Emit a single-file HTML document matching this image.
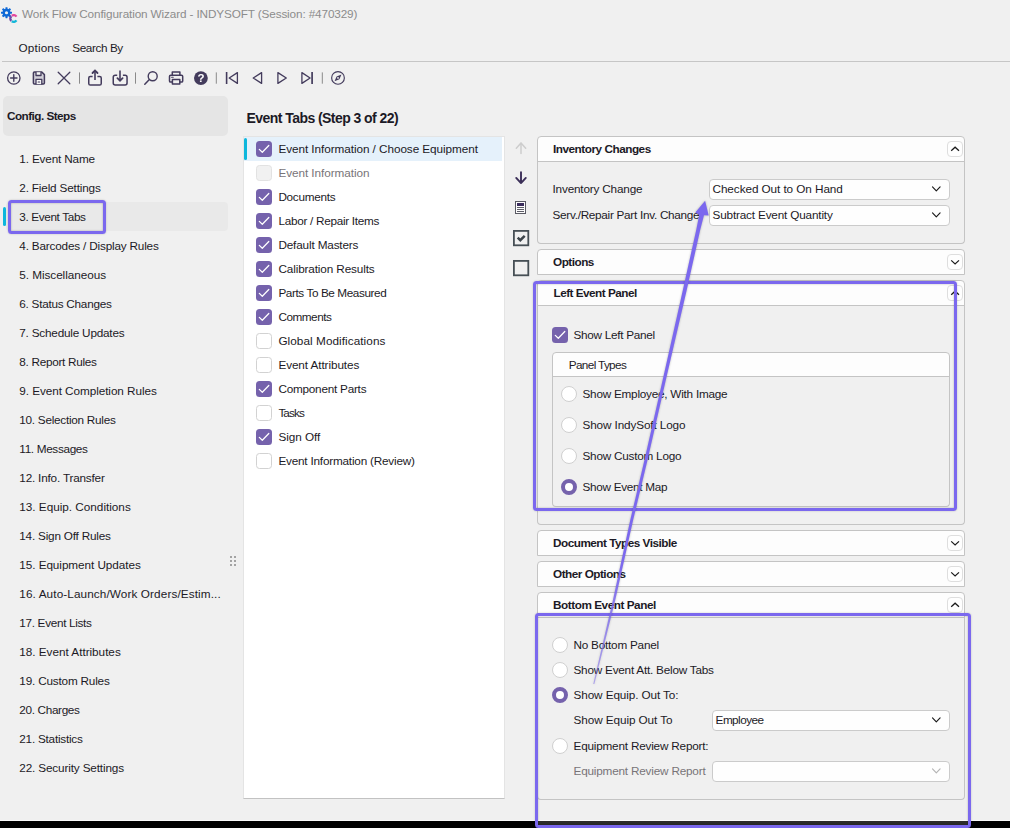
<!DOCTYPE html>
<html lang="en"><head><meta charset="utf-8"><title>Work Flow Configuration Wizard - INDYSOFT</title>
<style>
html,body{margin:0;padding:0}
body{width:1010px;height:828px;overflow:hidden;background:#f0f0f0;position:relative;font-family:"Liberation Sans",Arial,sans-serif;font-size:11.75px;color:#1c1a26}
.a{position:absolute}
.t{position:absolute;white-space:pre;line-height:14px;height:14px}
.b{font-weight:bold}
.box{position:absolute;box-sizing:border-box}
.hdr{position:absolute;box-sizing:border-box;background:#fdfdfd;border:1px solid #c4c4c4}
.body{position:absolute;box-sizing:border-box;border:1px solid #c4c4c4;border-top:none;border-radius:0 0 4px 4px}
.cb{position:absolute;box-sizing:border-box;width:16px;height:16px;border-radius:3.5px}
.cb.on{background:#7562ac}
.cb.off{background:#fff;border:1px solid #d2d2d2}
.cb.dis{background:#f1f1f1;border:1px solid #e2e2e2}
.rd{position:absolute;box-sizing:border-box;width:16px;height:16px;border-radius:50%;background:#fff;border:1px solid #d0d0d0}
.rd.on{border:4px solid #7562ac}
.combo{position:absolute;box-sizing:border-box;background:#fefefe;border:1px solid #cbcbcb;border-radius:4px;height:21px}
.btn{position:absolute;box-sizing:border-box;width:16px;height:16px;background:#fefefe;border:1px solid #dedede;border-radius:4px}
svg{position:absolute;overflow:visible}

</style></head><body>

<svg style="left:0;top:0" width="24" height="28" viewBox="0 0 24 28">
<g transform="translate(6.5 12.7)" fill="#0f69d6"><circle r="3.9"/><rect x="-1.05" y="-5.5" width="2.1" height="3" rx=".4" transform="rotate(0)"/><rect x="-1.05" y="-5.5" width="2.1" height="3" rx=".4" transform="rotate(45)"/><rect x="-1.05" y="-5.5" width="2.1" height="3" rx=".4" transform="rotate(90)"/><rect x="-1.05" y="-5.5" width="2.1" height="3" rx=".4" transform="rotate(135)"/><rect x="-1.05" y="-5.5" width="2.1" height="3" rx=".4" transform="rotate(180)"/><rect x="-1.05" y="-5.5" width="2.1" height="3" rx=".4" transform="rotate(225)"/><rect x="-1.05" y="-5.5" width="2.1" height="3" rx=".4" transform="rotate(270)"/><rect x="-1.05" y="-5.5" width="2.1" height="3" rx=".4" transform="rotate(315)"/><circle r="1.55" fill="#f0f0f0"/></g>
<g fill="none" stroke-width="2.3">
<path d="M16.49 16.55A3.4 3.4 0 0 0 11.75 15.72" stroke="#e2479c"/>
<path d="M11.3 16.1A3.4 3.4 0 0 0 11.3 20.9" stroke="#6a49a8"/>
<path d="M11.75 21.29A3.4 3.4 0 0 0 16.49 20.45" stroke="#12b7d9"/>
</g></svg>
<div class="a" style="left:2px;top:61px;width:1008px;height:1px;background:#c6c6c6"></div>
<svg style="left:0;top:62px" width="360" height="34" viewBox="0 62 360 34" fill="none" stroke="#433b5c" stroke-width="1.3" stroke-linecap="round" stroke-linejoin="round">
<circle cx="13.8" cy="78" r="6.2"/><path d="M10.6 78h6.4M13.8 74.8v6.4" stroke-width="1.4"/>
<path d="M34.4 72h7.4l2.6 2.6v8.4a1 1 0 0 1-1 1h-9a1 1 0 0 1-1-1v-10a1 1 0 0 1 1-1z" stroke-width="1.5" fill="#d2d0d8"/><path d="M36 72.3v3.2h5v-3.2M36 84v-4.6h5.8V84" stroke-width="1.3" fill="#f6f6f6"/><path d="M38.2 82h1.4" stroke-width="1.2"/>
<path d="M58.2 72.3l11.6 11.4M69.8 72.3L58.2 83.7" stroke-width="1.3"/>
<path d="M79.5 72.4v11.3" stroke="#8a8a8a" stroke-width="1" stroke-linecap="butt"/>
<path d="M92.6 76.5H90.35a1.6 1.6 0 0 0-1.6 1.6V83.4a1.6 1.6 0 0 0 1.6 1.6H99.65a1.6 1.6 0 0 0 1.6-1.6V78.1a1.6 1.6 0 0 0-1.6-1.6H97.4" stroke-width="1.5" stroke-linecap="butt"/><path d="M95 80V70.9" stroke-width="1.6" stroke-linecap="butt"/><path d="M92.5 73L95 70.5 97.5 73" stroke-width="1.8" stroke-linejoin="miter"/>
<path d="M117.2 75.35H115.25a2 2 0 0 0-2 2V83a2 2 0 0 0 2 2H125.05a2 2 0 0 0 2-2V77.35a2 2 0 0 0-2-2H122.9" stroke-width="1.5" stroke-linecap="butt"/><path d="M120 70.4V80.4" stroke-width="1.6" stroke-linecap="butt"/><path d="M117.4 78.2L120 80.8 122.6 78.2" stroke-width="1.8" stroke-linejoin="miter"/>
<path d="M135.5 72.4v11.3" stroke="#8a8a8a" stroke-width="1" stroke-linecap="butt"/>
<circle cx="152.7" cy="76.2" r="4.5" stroke-width="1.4"/><path d="M149.4 79.6l-4.6 4.7" stroke-width="1.5"/>
<path d="M172.3 75.2v-3.1h7.6v3.1" stroke-width="1.5"/><path d="M172 82h-1.4a1.1 1.1 0 0 1-1.1-1.1v-4.5a1.1 1.1 0 0 1 1.1-1.1h11a1.1 1.1 0 0 1 1.1 1.1v4.5a1.1 1.1 0 0 1-1.1 1.1h-1.4" stroke-width="1.5"/><path d="M172.4 79.6h7.4v4.5h-7.4z" stroke-width="1.5"/><path d="M171.6 77.3h1.6" stroke-width="1.1"/>
<circle cx="200.9" cy="78.1" r="6.9" fill="#433b5c" stroke="none"/>
<path d="M216.3 72.4v11.3" stroke="#8a8a8a" stroke-width="1" stroke-linecap="butt"/>
<path d="M226.6 72v12" stroke-width="1.6" stroke-linecap="butt"/><path d="M237.4 72.6v10.8l-8.2-5.4z" stroke-width="1.3"/>
<path d="M261.6 72.6v10.8l-8.4-5.4z" stroke-width="1.3"/>
<path d="M277.9 72.6v10.8l8.4-5.4z" stroke-width="1.3"/>
<path d="M301.9 72.6v10.8l8.2-5.4z" stroke-width="1.3"/><path d="M312.1 72v12" stroke-width="1.7" stroke-linecap="butt"/>
<path d="M322.3 72.4v11.3" stroke="#8a8a8a" stroke-width="1" stroke-linecap="butt"/>
<circle cx="338" cy="77.9" r="6.35" stroke-width="1.15"/><path d="M341.5 74.5L339.4 79.3 334.5 81.3 336.6 76.5z" fill="#433b5c" stroke="none"/><circle cx="338" cy="77.9" r=".9" fill="#f0f0f0" stroke="none"/>
</svg>
<div class="t b" style="left:196.9px;top:70.6px;font-size:11.5px;color:#fff;width:8px;text-align:center;opacity:.99">?</div>
<div class="box" style="left:3px;top:96px;width:225px;height:40px;background:#e5e5e5;border-radius:5px"></div>
<div class="box" style="left:6px;top:202px;width:222px;height:29px;background:#e9e9e9;border-radius:4px"></div>
<div class="box" style="left:3px;top:207px;width:3px;height:19px;background:#0db7dc;border-radius:1.5px"></div>
<div class="a" style="left:230px;top:556px;width:2px;height:2px;background:#a3a3a3"></div>
<div class="a" style="left:230px;top:560px;width:2px;height:2px;background:#a3a3a3"></div>
<div class="a" style="left:230px;top:564px;width:2px;height:2px;background:#a3a3a3"></div>
<div class="a" style="left:234px;top:556px;width:2px;height:2px;background:#a3a3a3"></div>
<div class="a" style="left:234px;top:560px;width:2px;height:2px;background:#a3a3a3"></div>
<div class="a" style="left:234px;top:564px;width:2px;height:2px;background:#a3a3a3"></div>
<div class="box" style="left:243px;top:136px;width:262px;height:663px;background:#fff;border:1px solid #e4e4e4;border-bottom-color:#c2c2c2"></div>
<div class="box" style="left:244px;top:137px;width:258px;height:24px;background:#e5f1fb"></div>
<div class="box" style="left:244px;top:138px;width:3px;height:22px;background:#0db7dc;border-radius:1.5px"></div>
<div class="cb on" style="left:256px;top:141px"><svg style="left:0;top:0" width="16" height="16" viewBox="0 0 16 16"><path d="M3.3 8.4l3 2.9 6.5-6.8" fill="none" stroke="#fff" stroke-width="1.25" stroke-linecap="round" stroke-linejoin="round"/></svg></div>
<div class="cb dis" style="left:256px;top:165px"></div>
<div class="cb on" style="left:256px;top:189px"><svg style="left:0;top:0" width="16" height="16" viewBox="0 0 16 16"><path d="M3.3 8.4l3 2.9 6.5-6.8" fill="none" stroke="#fff" stroke-width="1.25" stroke-linecap="round" stroke-linejoin="round"/></svg></div>
<div class="cb on" style="left:256px;top:213px"><svg style="left:0;top:0" width="16" height="16" viewBox="0 0 16 16"><path d="M3.3 8.4l3 2.9 6.5-6.8" fill="none" stroke="#fff" stroke-width="1.25" stroke-linecap="round" stroke-linejoin="round"/></svg></div>
<div class="cb on" style="left:256px;top:237px"><svg style="left:0;top:0" width="16" height="16" viewBox="0 0 16 16"><path d="M3.3 8.4l3 2.9 6.5-6.8" fill="none" stroke="#fff" stroke-width="1.25" stroke-linecap="round" stroke-linejoin="round"/></svg></div>
<div class="cb on" style="left:256px;top:261px"><svg style="left:0;top:0" width="16" height="16" viewBox="0 0 16 16"><path d="M3.3 8.4l3 2.9 6.5-6.8" fill="none" stroke="#fff" stroke-width="1.25" stroke-linecap="round" stroke-linejoin="round"/></svg></div>
<div class="cb on" style="left:256px;top:285px"><svg style="left:0;top:0" width="16" height="16" viewBox="0 0 16 16"><path d="M3.3 8.4l3 2.9 6.5-6.8" fill="none" stroke="#fff" stroke-width="1.25" stroke-linecap="round" stroke-linejoin="round"/></svg></div>
<div class="cb on" style="left:256px;top:309px"><svg style="left:0;top:0" width="16" height="16" viewBox="0 0 16 16"><path d="M3.3 8.4l3 2.9 6.5-6.8" fill="none" stroke="#fff" stroke-width="1.25" stroke-linecap="round" stroke-linejoin="round"/></svg></div>
<div class="cb off" style="left:256px;top:333px"></div>
<div class="cb off" style="left:256px;top:357px"></div>
<div class="cb on" style="left:256px;top:381px"><svg style="left:0;top:0" width="16" height="16" viewBox="0 0 16 16"><path d="M3.3 8.4l3 2.9 6.5-6.8" fill="none" stroke="#fff" stroke-width="1.25" stroke-linecap="round" stroke-linejoin="round"/></svg></div>
<div class="cb off" style="left:256px;top:405px"></div>
<div class="cb on" style="left:256px;top:429px"><svg style="left:0;top:0" width="16" height="16" viewBox="0 0 16 16"><path d="M3.3 8.4l3 2.9 6.5-6.8" fill="none" stroke="#fff" stroke-width="1.25" stroke-linecap="round" stroke-linejoin="round"/></svg></div>
<div class="cb off" style="left:256px;top:453px"></div>
<svg style="left:510px;top:140px" width="24" height="140" viewBox="510 140 24 140" fill="none" stroke-linecap="round" stroke-linejoin="round">
<path d="M521 153.6V142.9M516.3 148.3L521 142.9 525.7 148.3" stroke="#cdcdcd" stroke-width="1.5"/>
<path d="M521 172.3V183M516.2 177.9L521 183.1 525.8 177.9" stroke="#3b2f58" stroke-width="1.9"/>
<g shape-rendering="crispEdges" stroke="none"><rect x="515" y="201" width="11" height="13" fill="#5a5a64"/><rect x="516" y="202" width="9" height="11" fill="#fdfdfd"/><rect x="517" y="203" width="7" height="3" fill="#3a2c5c"/><rect x="517" y="207" width="7" height="1" fill="#5d5d68"/><rect x="517" y="209" width="7" height="1" fill="#5d5d68"/><rect x="517" y="211" width="7" height="1" fill="#5d5d68"/></g>
<rect x="513.9" y="230.9" width="14.4" height="14.4" stroke="#464f55" stroke-width="1.8" stroke-linejoin="miter"/>
<path d="M517.7 237.7l2.6 2.5 4.4-4.4" stroke="#3c444a" stroke-width="2.5" stroke-linecap="butt" stroke-linejoin="miter"/>
<rect x="513.9" y="260.9" width="14.4" height="14.4" stroke="#464f55" stroke-width="1.8" stroke-linejoin="miter"/>
</svg>
<div class="hdr" style="left:537px;top:136px;width:428px;height:26px;border-radius:4px 4px 0 0"></div>
<div class="btn" style="left:947px;top:141px"></div>
<svg style="left:0;top:0" width="1010" height="828"><path d="M951.2 150.7l3.9 -3.5 3.9 3.5" fill="none" stroke="#1a1a1a" stroke-width="1.25" stroke-linecap="butt" stroke-linejoin="miter"/></svg>
<div class="body" style="left:537px;top:161px;width:428px;height:83px"></div>
<div class="combo" style="left:709px;top:179px;width:241px"></div>
<svg style="left:0;top:0" width="1010" height="828"><path d="M932.5 186.8l3.8 4 3.8 -4" fill="none" stroke="#1a1a1a" stroke-width="1.15" stroke-linecap="round" stroke-linejoin="round"/></svg>
<div class="combo" style="left:709px;top:205px;width:241px"></div>
<svg style="left:0;top:0" width="1010" height="828"><path d="M932.5 212.8l3.8 4 3.8 -4" fill="none" stroke="#1a1a1a" stroke-width="1.15" stroke-linecap="round" stroke-linejoin="round"/></svg>
<div class="hdr" style="left:537px;top:249px;width:428px;height:26px;border-radius:4px 4px 0 0"></div>
<div class="btn" style="left:947px;top:254px"></div>
<svg style="left:0;top:0" width="1010" height="828"><path d="M951.2 260.4l3.9 3.5 3.9 -3.5" fill="none" stroke="#1a1a1a" stroke-width="1.25" stroke-linecap="butt" stroke-linejoin="miter"/></svg>
<div class="hdr" style="left:537px;top:280px;width:428px;height:26px;border-radius:4px 4px 0 0"></div>
<div class="btn" style="left:947px;top:285px"></div>
<svg style="left:0;top:0" width="1010" height="828"><path d="M951.2 294.7l3.9 -3.5 3.9 3.5" fill="none" stroke="#1a1a1a" stroke-width="1.25" stroke-linecap="butt" stroke-linejoin="miter"/></svg>
<div class="body" style="left:537px;top:305px;width:428px;height:220px"></div>
<div class="cb on" style="left:552px;top:327px"><svg style="left:0;top:0" width="16" height="16" viewBox="0 0 16 16"><path d="M3.3 8.4l3 2.9 6.5-6.8" fill="none" stroke="#fff" stroke-width="1.25" stroke-linecap="round" stroke-linejoin="round"/></svg></div>
<div class="hdr" style="left:552px;top:352px;width:398px;height:25px;border-radius:4px 4px 0 0"></div>
<div class="body" style="left:552px;top:376px;width:398px;height:131px"></div>
<div class="rd" style="left:561px;top:386px"></div>
<div class="rd" style="left:561px;top:417px"></div>
<div class="rd" style="left:561px;top:448px"></div>
<div class="rd on" style="left:561px;top:479px"></div>
<div class="hdr" style="left:537px;top:530px;width:428px;height:26px;border-radius:4px 4px 0 0"></div>
<div class="btn" style="left:947px;top:535px"></div>
<svg style="left:0;top:0" width="1010" height="828"><path d="M951.2 541.4l3.9 3.5 3.9 -3.5" fill="none" stroke="#1a1a1a" stroke-width="1.25" stroke-linecap="butt" stroke-linejoin="miter"/></svg>
<div class="hdr" style="left:537px;top:561px;width:428px;height:26px;border-radius:4px 4px 0 0"></div>
<div class="btn" style="left:947px;top:566px"></div>
<svg style="left:0;top:0" width="1010" height="828"><path d="M951.2 572.4l3.9 3.5 3.9 -3.5" fill="none" stroke="#1a1a1a" stroke-width="1.25" stroke-linecap="butt" stroke-linejoin="miter"/></svg>
<div class="hdr" style="left:537px;top:592px;width:428px;height:26px;border-radius:4px 4px 0 0"></div>
<div class="btn" style="left:947px;top:597px"></div>
<svg style="left:0;top:0" width="1010" height="828"><path d="M951.2 606.7l3.9 -3.5 3.9 3.5" fill="none" stroke="#1a1a1a" stroke-width="1.25" stroke-linecap="butt" stroke-linejoin="miter"/></svg>
<div class="body" style="left:537px;top:617px;width:428px;height:183px"></div>
<div class="rd" style="left:552px;top:637px"></div>
<div class="rd" style="left:552px;top:662px"></div>
<div class="rd on" style="left:552px;top:687px"></div>
<div class="rd" style="left:552px;top:738px"></div>
<div class="combo" style="left:712px;top:710px;width:238px"></div>
<svg style="left:0;top:0" width="1010" height="828"><path d="M932.5 717.8l3.8 4 3.8 -4" fill="none" stroke="#1a1a1a" stroke-width="1.15" stroke-linecap="round" stroke-linejoin="round"/></svg>
<div class="combo" style="left:712px;top:761px;width:238px"></div>
<svg style="left:0;top:0" width="1010" height="828"><path d="M932.5 768.8l3.8 4 3.8 -4" fill="none" stroke="#b4b4b4" stroke-width="1.15" stroke-linecap="round" stroke-linejoin="round"/></svg>
<div class="t" style="left:22.0px;top:7.0px;letter-spacing:-0.129px;color:#8c8c8c">Work Flow Configuration Wizard - INDYSOFT (Session: #470329)</div>
<div class="t" style="left:18.5px;top:41.0px;letter-spacing:0.154px">Options</div>
<div class="t" style="left:72.3px;top:41.0px;letter-spacing:-0.414px">Search By</div>
<div class="t b" style="left:7.0px;top:109.0px;letter-spacing:-0.539px">Config. Steps</div>
<div class="t" style="left:19.3px;top:152.0px;letter-spacing:-0.161px">1. Event Name</div>
<div class="t" style="left:19.3px;top:181.0px;letter-spacing:-0.171px">2. Field Settings</div>
<div class="t" style="left:19.3px;top:210.0px;letter-spacing:-0.363px">3. Event Tabs</div>
<div class="t" style="left:19.3px;top:239.0px;letter-spacing:-0.184px">4. Barcodes / Display Rules</div>
<div class="t" style="left:19.3px;top:268.0px;letter-spacing:-0.054px">5. Miscellaneous</div>
<div class="t" style="left:19.3px;top:297.0px;letter-spacing:-0.257px">6. Status Changes</div>
<div class="t" style="left:19.3px;top:326.0px;letter-spacing:-0.210px">7. Schedule Updates</div>
<div class="t" style="left:19.3px;top:355.0px;letter-spacing:-0.289px">8. Report Rules</div>
<div class="t" style="left:19.3px;top:384.0px;letter-spacing:-0.068px">9. Event Completion Rules</div>
<div class="t" style="left:19.3px;top:413.0px;letter-spacing:-0.259px">10. Selection Rules</div>
<div class="t" style="left:19.3px;top:442.0px;letter-spacing:-0.333px">11. Messages</div>
<div class="t" style="left:19.3px;top:471.0px;letter-spacing:-0.193px">12. Info. Transfer</div>
<div class="t" style="left:19.3px;top:500.0px;letter-spacing:-0.012px">13. Equip. Conditions</div>
<div class="t" style="left:19.3px;top:529.0px;letter-spacing:-0.212px">14. Sign Off Rules</div>
<div class="t" style="left:19.3px;top:558.0px;letter-spacing:-0.066px">15. Equipment Updates</div>
<div class="t" style="left:19.3px;top:587.0px;letter-spacing:0.107px">16. Auto-Launch/Work Orders/Estim...</div>
<div class="t" style="left:19.3px;top:616.0px;letter-spacing:-0.319px">17. Event Lists</div>
<div class="t" style="left:19.3px;top:645.0px;letter-spacing:-0.023px">18. Event Attributes</div>
<div class="t" style="left:19.3px;top:674.0px;letter-spacing:-0.190px">19. Custom Rules</div>
<div class="t" style="left:19.3px;top:703.0px;letter-spacing:-0.340px">20. Charges</div>
<div class="t" style="left:19.3px;top:732.0px;letter-spacing:-0.235px">21. Statistics</div>
<div class="t" style="left:19.3px;top:761.0px;letter-spacing:-0.150px">22. Security Settings</div>
<div class="t b" style="left:246.6px;top:109.5px;letter-spacing:-0.561px;font-size:14px;line-height:16px;height:16px">Event Tabs (Step 3 of 22)</div>
<div class="t" style="left:278.4px;top:142.0px;letter-spacing:-0.063px">Event Information / Choose Equipment</div>
<div class="t" style="left:278.4px;top:166.0px;letter-spacing:-0.066px;color:#787478">Event Information</div>
<div class="t" style="left:278.4px;top:190.0px;letter-spacing:-0.287px">Documents</div>
<div class="t" style="left:278.4px;top:214.0px;letter-spacing:-0.285px">Labor / Repair Items</div>
<div class="t" style="left:278.4px;top:238.0px;letter-spacing:-0.157px">Default Masters</div>
<div class="t" style="left:278.4px;top:262.0px;letter-spacing:-0.126px">Calibration Results</div>
<div class="t" style="left:278.4px;top:286.0px;letter-spacing:-0.402px">Parts To Be Measured</div>
<div class="t" style="left:278.4px;top:310.0px;letter-spacing:-0.468px">Comments</div>
<div class="t" style="left:278.4px;top:334.0px;letter-spacing:0.061px">Global Modifications</div>
<div class="t" style="left:278.4px;top:358.0px;letter-spacing:-0.090px">Event Attributes</div>
<div class="t" style="left:278.4px;top:382.0px;letter-spacing:-0.237px">Component Parts</div>
<div class="t" style="left:278.4px;top:406.0px;letter-spacing:-0.899px">Tasks</div>
<div class="t" style="left:278.4px;top:430.0px;letter-spacing:-0.047px">Sign Off</div>
<div class="t" style="left:278.4px;top:454.0px;letter-spacing:-0.205px">Event Information (Review)</div>
<div class="t b" style="left:553.0px;top:142.0px;letter-spacing:-0.472px">Inventory Changes</div>
<div class="t" style="left:552.5px;top:182.0px;letter-spacing:-0.178px">Inventory Change</div>
<div class="t" style="left:552.5px;top:208.0px;letter-spacing:-0.281px">Serv./Repair Part Inv. Change</div>
<div class="t" style="left:712.5px;top:182.0px;letter-spacing:-0.076px">Checked Out to On Hand</div>
<div class="t" style="left:712.5px;top:208.0px;letter-spacing:-0.173px">Subtract Event Quantity</div>
<div class="t b" style="left:553.0px;top:255.0px;letter-spacing:-0.506px">Options</div>
<div class="t b" style="left:553.5px;top:286.0px;letter-spacing:-0.511px">Left Event Panel</div>
<div class="t" style="left:573.5px;top:328.0px;letter-spacing:-0.281px">Show Left Panel</div>
<div class="t" style="left:568.8px;top:358.0px;letter-spacing:-0.648px">Panel Types</div>
<div class="t" style="left:582.5px;top:387.0px;letter-spacing:-0.239px">Show Employee, With Image</div>
<div class="t" style="left:582.5px;top:418.0px;letter-spacing:-0.124px">Show IndySoft Logo</div>
<div class="t" style="left:582.5px;top:449.0px;letter-spacing:-0.235px">Show Custom Logo</div>
<div class="t" style="left:582.5px;top:480.0px;letter-spacing:-0.298px">Show Event Map</div>
<div class="t b" style="left:553.0px;top:536.0px;letter-spacing:-0.499px">Document Types Visible</div>
<div class="t b" style="left:553.0px;top:567.0px;letter-spacing:-0.496px">Other Options</div>
<div class="t b" style="left:553.0px;top:598.0px;letter-spacing:-0.457px">Bottom Event Panel</div>
<div class="t" style="left:573.5px;top:638.0px;letter-spacing:-0.230px">No Bottom Panel</div>
<div class="t" style="left:573.5px;top:663.0px;letter-spacing:-0.227px">Show Event Att. Below Tabs</div>
<div class="t" style="left:573.5px;top:688.0px;letter-spacing:-0.103px">Show Equip. Out To:</div>
<div class="t" style="left:573.5px;top:713.0px;letter-spacing:-0.083px">Show Equip Out To</div>
<div class="t" style="left:715.6px;top:713.0px;letter-spacing:-0.547px">Employee</div>
<div class="t" style="left:573.5px;top:739.0px;letter-spacing:-0.203px">Equipment Review Report:</div>
<div class="t" style="left:573.5px;top:764.2px;letter-spacing:-0.196px;color:#787478">Equipment Review Report</div>
<div class="a" style="left:0;top:820px;width:1010px;height:1px;background:#fafafa"></div>
<div class="a" style="left:0;top:821px;width:1010px;height:7px;background:#000"></div>
<div class="a" style="left:538px;top:821px;width:430px;height:4px;background:#2c2c2c"></div>
<div class="box" style="left:8px;top:200px;width:98px;height:34px;border:3px solid #7b68ee;border-radius:3.5px;box-shadow:0 0 2px rgba(0,0,0,.22),inset 0 0 2px rgba(0,0,0,.3)"></div>
<div class="box" style="left:533px;top:281px;width:424px;height:230px;border:3px solid #7b68ee;border-radius:3.5px;box-shadow:0 0 2px rgba(0,0,0,.22),inset 0 0 2px rgba(0,0,0,.3)"></div>
<div class="box" style="left:535px;top:613px;width:436px;height:215px;border:3px solid #7b68ee;border-radius:3.5px;box-shadow:0 0 2px rgba(0,0,0,.22),inset 0 0 2px rgba(0,0,0,.3)"></div>
<svg style="left:0;top:0;filter:drop-shadow(0 0 1px rgba(0,0,0,.25))" width="1010" height="828"><defs><linearGradient id="ag" gradientUnits="userSpaceOnUse" x1="594" y1="684" x2="622" y2="560"><stop offset="0" stop-color="#7b68ee" stop-opacity=".5"/><stop offset="1" stop-color="#7b68ee"/></linearGradient></defs><path d="M593.2 684L612.9 600 630.25 520 644.45 460 662.65 380 682.85 290 696.2 230 699.2 215 695.3 212.4 705.1 200.8 708.7 215.4 704 215.2 700.2 230 686.75 290 665.85 380 647.55 460 633.15 520 615.3 600 594.4 684z" fill="url(#ag)"/></svg>

</body></html>
